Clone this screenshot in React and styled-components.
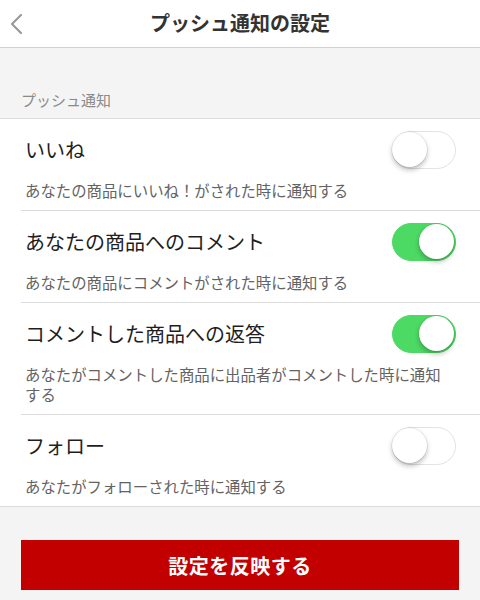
import React, { useState } from "react";
import styled, { createGlobalStyle } from "styled-components";

const GlobalStyle = createGlobalStyle`
  html, body { margin: 0; padding: 0; background: #f4f4f4; }
  body { font-family: "Noto Sans CJK JP", "Noto Sans", sans-serif; }
  * { box-sizing: border-box; }
`;

const Page = styled.div`
  width: 480px;
  min-height: 600px;
  background: #f4f4f4;
  display: flex;
  flex-direction: column;
`;

const Header = styled.header`
  height: 48px;
  background: #fff;
  border-bottom: 1px solid #d2d2d2;
  display: grid;
  grid-template-columns: 48px 1fr 48px;
  align-items: center;
`;

const BackButton = styled.button`
  border: none;
  background: none;
  padding: 0 0 0 8px;
  height: 47px;
  display: flex;
  align-items: center;
  cursor: pointer;
`;

const Title = styled.h1`
  margin: 0;
  text-align: center;
  font-size: 20px;
  font-weight: 700;
  color: #333;
  line-height: 40px;
  padding-bottom: 2px;
`;

const SectionLabel = styled.div`
  height: 70px;
  padding: 0 0 8px 21px;
  display: flex;
  align-items: flex-end;
  font-size: 15px;
  line-height: 20px;
  color: #8a8a8a;
`;

const List = styled.ul`
  list-style: none;
  margin: 0;
  padding: 0;
  background: #fff;
  border-top: 1px solid #dcdcdc;
  border-bottom: 1px solid #dcdcdc;
`;

const Item = styled.li`
  padding: 12px 23px 10px 25px;
  position: relative;
  & + &::before {
    content: "";
    position: absolute;
    top: -1px;
    left: 21px;
    right: 0;
    height: 1px;
    background: #dcdcdc;
  }
  & + & {
    border-top: 1px solid transparent;
  }
`;

const ItemHead = styled.div`
  display: flex;
  align-items: center;
  justify-content: space-between;
  height: 38px;
`;

const ItemTitle = styled.span`
  font-size: 20px;
  line-height: 28px;
  color: #1e1e1e;
`;

const ItemDesc = styled.p`
  margin: 11px 0 0;
  font-size: 15.4px;
  line-height: 20px;
  color: #636363;
  padding-right: 10px;
`;

const Switch = styled.button`
  width: 64px;
  height: 38px;
  border-radius: 19px;
  padding: 0;
  border: 1.5px solid ${(p) => (p.$on ? "#4cd964" : "#e3e3e3")};
  background: ${(p) => (p.$on ? "#4cd964" : "#fff")};
  position: relative;
  cursor: pointer;
  flex: none;
  margin-right: 1px;
`;

const Knob = styled.span`
  position: absolute;
  top: 0px;
  left: ${(p) => (p.$on ? "26px" : "-1px")};
  width: 35px;
  height: 35px;
  border-radius: 50%;
  background: #fff;
  box-shadow: 0 3px 5px rgba(0, 0, 0, 0.25), 0 0 0 0.5px rgba(0, 0, 0, 0.12);
`;

const Footer = styled.div`
  padding: 33px 21px 10px;
`;

const SubmitButton = styled.button`
  width: 100%;
  height: 50px;
  border: none;
  background: #c20000;
  color: #fff;
  font-family: inherit;
  font-size: 20px;
  font-weight: 700;
  letter-spacing: 0.5px;
  cursor: pointer;
`;

const items = [
  { title: "いいね", desc: "あなたの商品にいいね！がされた時に通知する", on: false },
  { title: "あなたの商品へのコメント", desc: "あなたの商品にコメントがされた時に通知する", on: true },
  {
    title: "コメントした商品への返答",
    desc: "あなたがコメントした商品に出品者がコメントした時に通知する",
    on: true,
  },
  { title: "フォロー", desc: "あなたがフォローされた時に通知する", on: false },
];

export default function App() {
  const [state, setState] = useState(items.map((i) => i.on));
  return (
    <Page>
      <GlobalStyle />
      <Header>
        <BackButton aria-label="戻る">
          <svg width="16" height="24" viewBox="0 0 16 24">
            <polyline
              points="13,3 4,12 13,21"
              fill="none"
              stroke="#9a9a9a"
              strokeWidth="2.2"
              strokeLinecap="round"
              strokeLinejoin="round"
            />
          </svg>
        </BackButton>
        <Title>プッシュ通知の設定</Title>
        <span />
      </Header>
      <SectionLabel>プッシュ通知</SectionLabel>
      <List>
        {items.map((it, i) => (
          <Item key={it.title}>
            <ItemHead>
              <ItemTitle>{it.title}</ItemTitle>
              <Switch
                $on={state[i]}
                onClick={() => setState((s) => s.map((v, j) => (j === i ? !v : v)))}
              >
                <Knob $on={state[i]} />
              </Switch>
            </ItemHead>
            <ItemDesc>{it.desc}</ItemDesc>
          </Item>
        ))}
      </List>
      <Footer>
        <SubmitButton>設定を反映する</SubmitButton>
      </Footer>
    </Page>
  );
}
